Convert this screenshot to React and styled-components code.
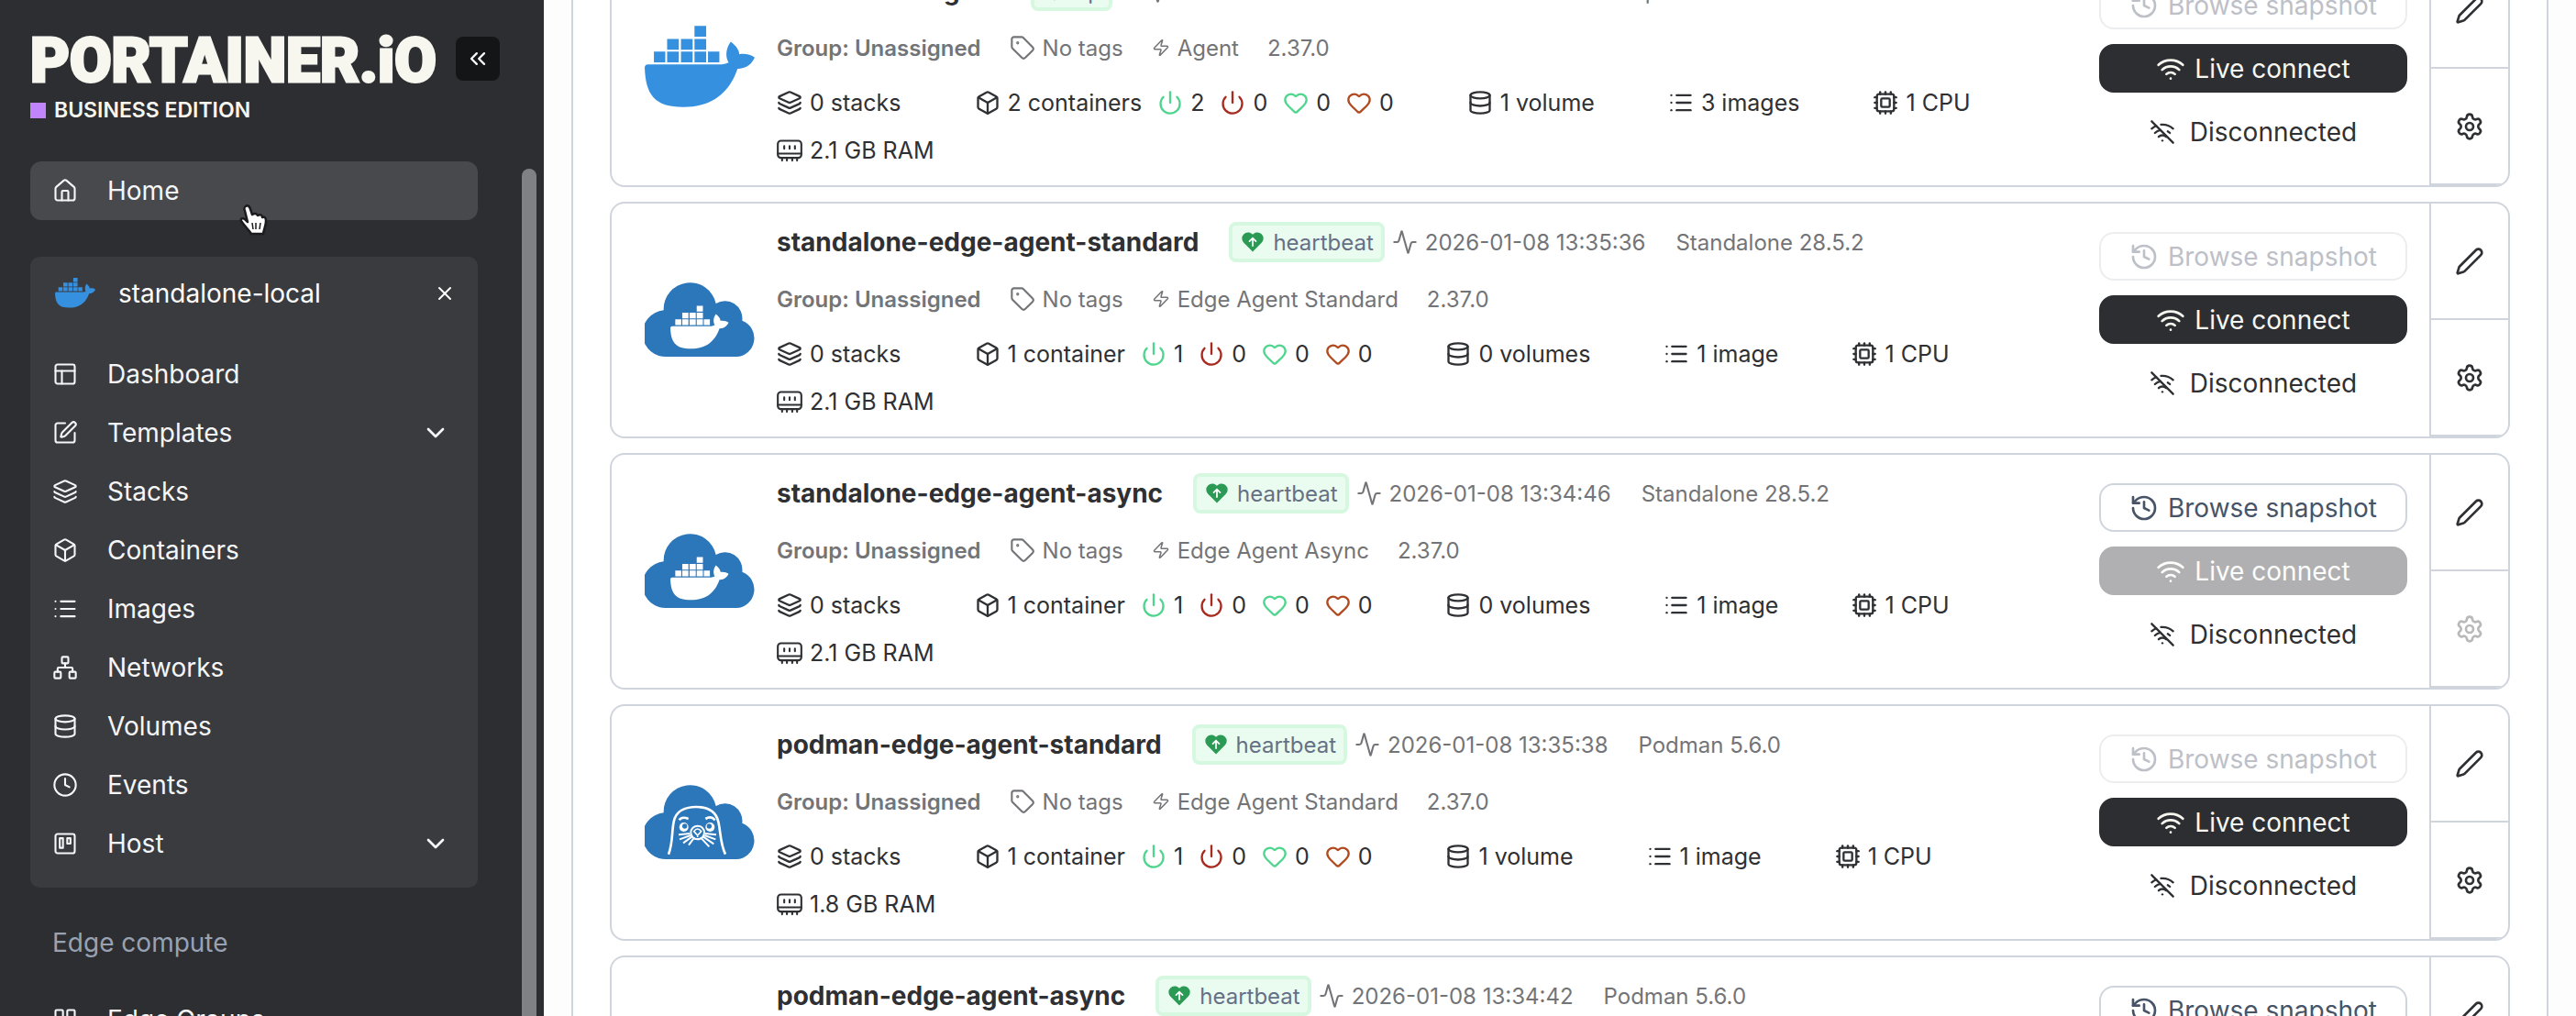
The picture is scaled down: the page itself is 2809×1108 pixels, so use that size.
import styled, { createGlobalStyle } from "styled-components";
import {
    Activity,
    Box,
    ChevronDown,
    ChevronsLeft,
    Clock,
    Cpu,
    Database,
    Heart,
    History,
    House,
    Layers,
    LayoutGrid,
    List,
    Network,
    PanelsTopLeft,
    Pen,
    Power,
    Settings,
    SquarePen,
    Tag,
    Wifi,
    WifiOff,
    X,
    Zap,
} from "lucide-react";

const GlobalStyle = createGlobalStyle`
    * {
        box-sizing: border-box;
    }
    body {
        margin: 0;
        background-color: #FDFDFE;
        font-family: Inter, "Liberation Sans", sans-serif;
        font-size: 25px;
        color: #2F3033;
    }
    button {
        font-family: inherit;
        cursor: pointer;
    }
    svg {
        display: block;
        flex-shrink: 0;
    }
`;

const Page = styled.div`
    display: flex;
    height: 100vh;
    overflow: hidden;
`;

const Sidebar = styled.aside`
    display: flex;
    flex-direction: column;
    flex-shrink: 0;
    width: 593px;
    background-color: #2D2E32;
    color: #F5F6F8;
`;

const SidebarTop = styled.header`
    display: flex;
    align-items: flex-start;
    justify-content: space-between;
    height: 176px;
    flex-shrink: 0;
    padding: 40px 48px 0 33px;
`;

const Brand = styled.div`
    display: flex;
    flex-direction: column;
    gap: 14px;
`;

const Wordmark = styled.div`
    font-family: Roboto, "Liberation Sans", sans-serif;
    font-weight: 900;
    font-size: 66px;
    line-height: 54px;
    color: #F7F7F0;
    -webkit-text-stroke: 3px #F7F7F0;
    white-space: nowrap;
`;

const Edition = styled.div`
    display: flex;
    align-items: center;
    gap: 9px;
    font-size: 23px;
    font-weight: 600;
    line-height: 24px;
    color: #F7F7F0;
    white-space: nowrap;
`;

const EditionMark = styled.span`
    width: 17px;
    height: 17px;
    background-color: #C084FC;
`;

const Collapse = styled.button`
    display: flex;
    align-items: center;
    justify-content: center;
    flex-shrink: 0;
    width: 48px;
    height: 48px;
    padding: 0;
    border: 0;
    border-radius: 8px;
    background-color: #141517;
    color: #F5F6F8;
`;

const SidebarBody = styled.div`
    display: flex;
    flex: 1;
    min-height: 0;
    justify-content: space-between;
    padding: 0 8px 0 33px;
`;

const Nav = styled.nav`
    display: flex;
    flex-direction: column;
    width: 488px;
`;

const NavLink = styled.a`
    display: flex;
    align-items: center;
    gap: 32px;
    flex-shrink: 0;
    height: 64px;
    padding: 0 30px 0 24px;
    border-radius: 12px;
    background-color: ${props => props.$active ? "#48494D" : "transparent"};
    color: #F5F6F8;
    font-size: 28px;
    text-decoration: none;
`;

const NavText = styled.span`
    flex: 1;
`;

const Environment = styled.section`
    display: flex;
    flex-direction: column;
    margin-top: 40px;
    padding-bottom: 16px;
    border-radius: 10px;
    background-color: #3A3B3F;
`;

const EnvironmentTop = styled.div`
    display: flex;
    align-items: center;
    gap: 25px;
    height: 80px;
    margin-bottom: 16px;
    padding: 0 24px 0 27px;
    font-size: 28px;
    color: #FFFFFF;
`;

const Close = styled.button`
    display: flex;
    padding: 0;
    border: 0;
    background: none;
    color: #FFFFFF;
`;

const NavTitle = styled.h2`
    margin: 28px 0 20px;
    padding-left: 24px;
    font-size: 28px;
    font-weight: 400;
    line-height: 64px;
    color: #98A2B3;
`;

const Scrollbar = styled.div`
    width: 16px;
    margin-top: 8px;
    border-radius: 8px 8px 0 0;
    background-color: #808184;
`;

const Main = styled.main`
    flex: 1;
    min-width: 0;
    padding: 0 30px;
`;

const Widget = styled.div`
    min-height: 100vh;
    padding: 0 40px;
    border: solid #D0D5DD;
    border-width: 0 2px;
    background-color: #FFFFFF;
`;

/* the list is scrolled a little way past its first card */
const EnvironmentList = styled.div`
    display: flex;
    flex-direction: column;
    gap: 16px;
    margin-top: -54px;
`;

const Card = styled.article`
    display: flex;
    flex-shrink: 0;
    overflow: hidden;
    border: 2px solid #D0D5DD;
    border-radius: 16px;
    background-color: #FFFFFF;
`;

const Logo = styled.div`
    display: flex;
    align-items: center;
    padding: 0 24px 0 36px;
`;

const Info = styled.div`
    display: flex;
    flex-direction: column;
    flex: 1;
    min-width: 0;
    gap: 24px;
    padding: 20px 24px 18px 0;
`;

const InfoRow = styled.div`
    display: flex;
    align-items: center;
    font-size: 24px;
    color: #737477;
    white-space: nowrap;
`;

const TopRow = styled(InfoRow)`
    gap: 33px;
    height: 44px;
`;

const MetaRow = styled(InfoRow)`
    gap: 31px;
    height: 32px;
`;

const Name = styled.h3`
    margin: 0;
    font-size: 28px;
    font-weight: 700;
    color: #2F3033;
`;

const Beat = styled.div`
    display: flex;
    align-items: center;
    gap: ${props => props.$edge ? 8 : 32}px;
`;

const Badge = styled.span`
    display: flex;
    align-items: center;
    gap: 8px;
    height: 44px;
    padding: 0 8px;
    border: 4px solid #D6F8E1;
    border-radius: 8px;
    background-color: #EAFBF0;
    color: #667085;
`;

const Group = styled.span`
    font-weight: 600;
`;

const Detail = styled.span`
    display: flex;
    align-items: center;
    gap: 8px;
`;

const Stats = styled.div`
    display: flex;
    flex-wrap: wrap;
    gap: 12px 80px;
`;

const Stat = styled.div`
    display: flex;
    align-items: center;
    gap: 17px;
    height: 40px;
    white-space: nowrap;
`;

const Count = styled.span`
    display: flex;
    align-items: center;
    gap: 8px;

    svg {
        color: ${props => props.$tint || "inherit"};
    }
`;

const Actions = styled.div`
    display: flex;
    flex-direction: column;
    justify-content: center;
    gap: 16px;
    width: 336px;
    margin-right: 24px;
    flex-shrink: 0;
`;

const Action = styled.button`
    display: flex;
    align-items: center;
    justify-content: center;
    gap: 10px;
    height: 53px;
    border: 2px solid #D0D5DD;
    border-radius: 16px;
    background-color: #FFFFFF;
    color: #475467;
    font-size: 28px;

    &:disabled {
        border-color: #ECEDEF;
        color: #BDC0C7;
    }
`;

const LiveAction = styled(Action)`
    border-color: #2D2E32;
    background-color: #2D2E32;
    color: #F7F7F0;

    &:disabled {
        border-color: #B0B0B2;
        background-color: #B0B0B2;
        color: #FDFDFB;
    }
`;

const Status = styled.div`
    display: flex;
    align-items: center;
    justify-content: center;
    gap: 16px;
    height: 54px;
    font-size: 28px;
`;

const Tools = styled.div`
    display: flex;
    flex-direction: column;
    width: 86px;
    border-left: 2px solid #D0D5DD;
`;

const Tool = styled.button`
    display: flex;
    flex: 1;
    align-items: center;
    justify-content: center;
    padding: 0;
    border: 0;
    border-bottom: 2px solid #D0D5DD;
    background: none;
    color: #2F3033;

    &:disabled {
        color: #B9B9BA;
    }
`;

const Pointer = styled.svg`
    position: absolute;
    left: 260px;
    top: 222px;
`;

function Whale(){
    return(
        <g>
            <path d="M201 39h38v35h-38zM112 81h38v35h-38zM157 81h38v35h-38zM201 81h38v35h-38zM69 122h37v35H69zM112 122h38v35h-38zM157 122h38v35h-38zM201 122h38v35h-38zM245 122h37v35h-37z" />
            <path d="M50 164H290Q302 163 312 158C301 140 302 112 319 90C335 102 346 116 347 131C365 128 385 132 397 142C388 162 368 180 341 178C325 225 285 303 165 303C70 303 42 262 39 174Q40 164 50 164Z" />
        </g>
    )
}

function DockerLogo({width}){
    return(
        <svg width={width} viewBox="39 38 358 282" fill="#3690E0" aria-hidden="true">
            <Whale />
        </svg>
    )
}

const cloud = "M100 268A76 76 0 0 1 86 116A86.5 86.5 0 0 1 257 94A57 57 0 0 1 343 150A61 61 0 0 1 324 268Z";

function EdgeDockerLogo(){
    return(
        <svg width="120" viewBox="24 25 360 244" aria-hidden="true">
            <path d={cloud} fill="#2C77BA" />
            <g fill="#FFFFFF" transform="translate(87.3 80.8) scale(0.532)">
                <Whale />
            </g>
        </svg>
    )
}

function EdgePodmanLogo(){
    return(
        <svg width="120" viewBox="24 25 360 244" aria-hidden="true">
            <path d={cloud} fill="#2C77BA" />
            <g transform="translate(0 -9)" fill="none" stroke="#FFFFFF" strokeWidth="8">
                <path d="M102 261C116 226 112 190 119 155C126 117 160 106 192 106C225 106 257 117 265 155C273 190 271 226 288 261" />
                <path d="M137 149Q146 136 167 145M223 145Q241 134 254 149" />
                <path d="M135 197L172 193M138 212L174 199M150 224L178 204M168 231L184 209M258 197L222 193M256 212L220 199M250 227L216 204M235 236L210 209" strokeWidth="6" />
                <circle cx="152" cy="172" r="15" fill="#FFFFFF" stroke="none" />
                <circle cx="238" cy="172" r="15" fill="#FFFFFF" stroke="none" />
                <circle cx="155" cy="169" r="8" fill="#2C77BA" stroke="none" />
                <circle cx="235" cy="169" r="8" fill="#2C77BA" stroke="none" />
                <circle cx="197" cy="190" r="22" fill="#2C77BA" strokeWidth="6" />
                <path d="M185 186Q197 170 209 186L197 199ZM197 197V205M185 207Q197 216 209 207" strokeWidth="5" />
            </g>
        </svg>
    )
}

function HeartUp(){
    return(
        <svg width="28" height="28" viewBox="0 0 24 24" aria-hidden="true">
            <path d="M19 14c1.5-1.5 3-3.2 3-5.5A5.5 5.5 0 0 0 16.5 3c-1.8 0-3 .5-4.5 2c-1.5-1.5-2.7-2-4.5-2A5.5 5.5 0 0 0 2 8.5c0 2.3 1.5 4 3 5.5l7 7Z" fill="#2B9A55" />
            <path d="M12 15.5V8.5M9 11.3L12 8.3L15 11.3" fill="none" stroke="#FFFFFF" strokeWidth="1.5" strokeLinecap="round" />
        </svg>
    )
}

function Memory(){
    return(
        <svg width="28" height="28" viewBox="0 0 24 24" fill="none" stroke="currentColor" strokeWidth="1.8" strokeLinecap="round" aria-hidden="true">
            <rect x="1" y="3" width="22" height="16" rx="3" />
            <path d="M1 15H23M7 8V10.5M12 8V10.5M17 8V10.5M5 19V21.5M9.5 19V21.5M14.5 19V21.5M19 19V21.5" />
        </svg>
    )
}

function Board(){
    return(
        <svg width="28" height="28" viewBox="0 0 24 24" fill="none" stroke="currentColor" strokeWidth="1.8" strokeLinejoin="round" aria-hidden="true">
            <rect x="3" y="3" width="18" height="18" rx="2" />
            <path d="M7 7H10V16H7ZM14 7H17V12H14Z" />
        </svg>
    )
}

const links = [
    {text: "Dashboard", icon: PanelsTopLeft},
    {text: "Templates", icon: SquarePen, more: true},
    {text: "Stacks", icon: Layers},
    {text: "Containers", icon: Box},
    {text: "Images", icon: List},
    {text: "Networks", icon: Network},
    {text: "Volumes", icon: Database},
    {text: "Events", icon: Clock},
    {text: "Host", icon: Board, more: true},
];

const environments = [
    {name: "standalone-agent", status: "up", time: "2026-01-08 13:35:40", platform: "Standalone 28.5.2", address: "portainer:9001", agent: "Agent", containers: 2, volumes: 1, images: 3, ram: "2.1", logo: DockerLogo},
    {name: "standalone-edge-agent-standard", time: "2026-01-08 13:35:36", platform: "Standalone 28.5.2", agent: "Edge Agent Standard", containers: 1, volumes: 0, images: 1, ram: "2.1", logo: EdgeDockerLogo},
    {name: "standalone-edge-agent-async", time: "2026-01-08 13:34:46", platform: "Standalone 28.5.2", agent: "Edge Agent Async", containers: 1, volumes: 0, images: 1, ram: "2.1", logo: EdgeDockerLogo, async: true},
    {name: "podman-edge-agent-standard", time: "2026-01-08 13:35:38", platform: "Podman 5.6.0", agent: "Edge Agent Standard", containers: 1, volumes: 1, images: 1, ram: "1.8", logo: EdgePodmanLogo},
    {name: "podman-edge-agent-async", time: "2026-01-08 13:34:42", platform: "Podman 5.6.0", agent: "Edge Agent Async", containers: 1, volumes: 1, images: 1, ram: "1.8", logo: EdgePodmanLogo, async: true},
];

function plural(number, word){
    return `${number} ${word}${number === 1 ? "" : "s"}`;
}

function EnvironmentCard({env}){
    const EnvLogo = env.logo;
    return(
        <Card>
            <Logo><EnvLogo width="120" /></Logo>
            <Info>
                <TopRow>
                    <Name>{env.name}</Name>
                    <Beat $edge={!env.status}>
                        <Badge><HeartUp />{env.status || "heartbeat"}</Badge>
                        <Detail><Activity size={28} strokeWidth={1.8} />{env.time}</Detail>
                    </Beat>
                    <span>{env.platform}</span>
                    {env.address && <span>{env.address}</span>}
                </TopRow>
                <MetaRow>
                    <Group>Group: Unassigned</Group>
                    <Detail><Tag size={28} strokeWidth={1.8} />No tags</Detail>
                    <Detail><Zap size={20} strokeWidth={1.8} />{env.agent}</Detail>
                    <span>2.37.0</span>
                </MetaRow>
                <Stats>
                    <Stat><Count><Layers size={28} />0 stacks</Count></Stat>
                    <Stat>
                        <Count><Box size={28} />{plural(env.containers, "container")}</Count>
                        <Count $tint="#4FD58D"><Power size={28} />{env.containers}</Count>
                        <Count $tint="#A82B20"><Power size={28} />0</Count>
                        <Count $tint="#4FD58D"><Heart size={28} />0</Count>
                        <Count $tint="#B04A20"><Heart size={28} />0</Count>
                    </Stat>
                    <Stat><Count><Database size={28} />{plural(env.volumes, "volume")}</Count></Stat>
                    <Stat><Count><List size={28} />{plural(env.images, "image")}</Count></Stat>
                    <Stat><Count><Cpu size={28} />1 CPU</Count></Stat>
                    <Stat><Count><Memory />{env.ram} GB RAM</Count></Stat>
                </Stats>
            </Info>
            <Actions>
                <Action disabled={!env.async}><History size={32} />Browse snapshot</Action>
                <LiveAction disabled={env.async}><Wifi size={32} />Live connect</LiveAction>
                <Status><WifiOff size={28} />Disconnected</Status>
            </Actions>
            <Tools>
                <Tool aria-label="Edit"><Pen size={32} /></Tool>
                <Tool aria-label="Settings" disabled={env.async}><Settings size={32} /></Tool>
            </Tools>
        </Card>
    )
}

export default function App(){
    return(
        <Page>
            <GlobalStyle />
            <Sidebar>
                <SidebarTop>
                    <Brand>
                        <Wordmark>PORTAINER.iO</Wordmark>
                        <Edition><EditionMark />BUSINESS EDITION</Edition>
                    </Brand>
                    <Collapse aria-label="Collapse sidebar"><ChevronsLeft size={28} /></Collapse>
                </SidebarTop>
                <SidebarBody>
                    <Nav>
                        <NavLink href="#home" $active><House size={28} strokeWidth={1.8} /><NavText>Home</NavText></NavLink>
                        <Environment>
                            <EnvironmentTop>
                                <DockerLogo width="44" />
                                <NavText>standalone-local</NavText>
                                <Close aria-label="Close environment"><X size={24} /></Close>
                            </EnvironmentTop>
                            {links.map(link => {
                                const Icon = link.icon;
                                return(
                                    <NavLink key={link.text} href={`#${link.text.toLowerCase()}`}>
                                        <Icon size={28} strokeWidth={1.8} />
                                        <NavText>{link.text}</NavText>
                                        {link.more && <ChevronDown size={32} />}
                                    </NavLink>
                                )
                            })}
                        </Environment>
                        <NavTitle>Edge compute</NavTitle>
                        <NavLink href="#edge-groups"><LayoutGrid size={28} strokeWidth={1.8} /><NavText>Edge Groups</NavText></NavLink>
                    </Nav>
                    <Scrollbar />
                </SidebarBody>
            </Sidebar>
            <Main>
                <Widget>
                    <EnvironmentList>
                        {environments.map(env => <EnvironmentCard key={env.name} env={env} />)}
                    </EnvironmentList>
                </Widget>
            </Main>
            <Pointer width="32" height="36" viewBox="0 0 32 36" aria-hidden="true">
                <path d="M8 3C10 1 12 3 13 6L15 12C18 10 20 11 21 13C24 11 26 13 26 15C29 14 30 16 30 19C30 24 28 27 27 33H14C11 28 6 24 3 19C2 16 5 15 8 18L10 20L7 8C6 5 6 4 8 3Z" fill="#FFFFFF" stroke="#1B1B1D" strokeWidth="2.5" strokeLinejoin="round" />
                <path d="M15 21L16 28M19 21V28M24 21L23 28" stroke="#1B1B1D" strokeWidth="1.5" />
            </Pointer>
        </Page>
    )
}
